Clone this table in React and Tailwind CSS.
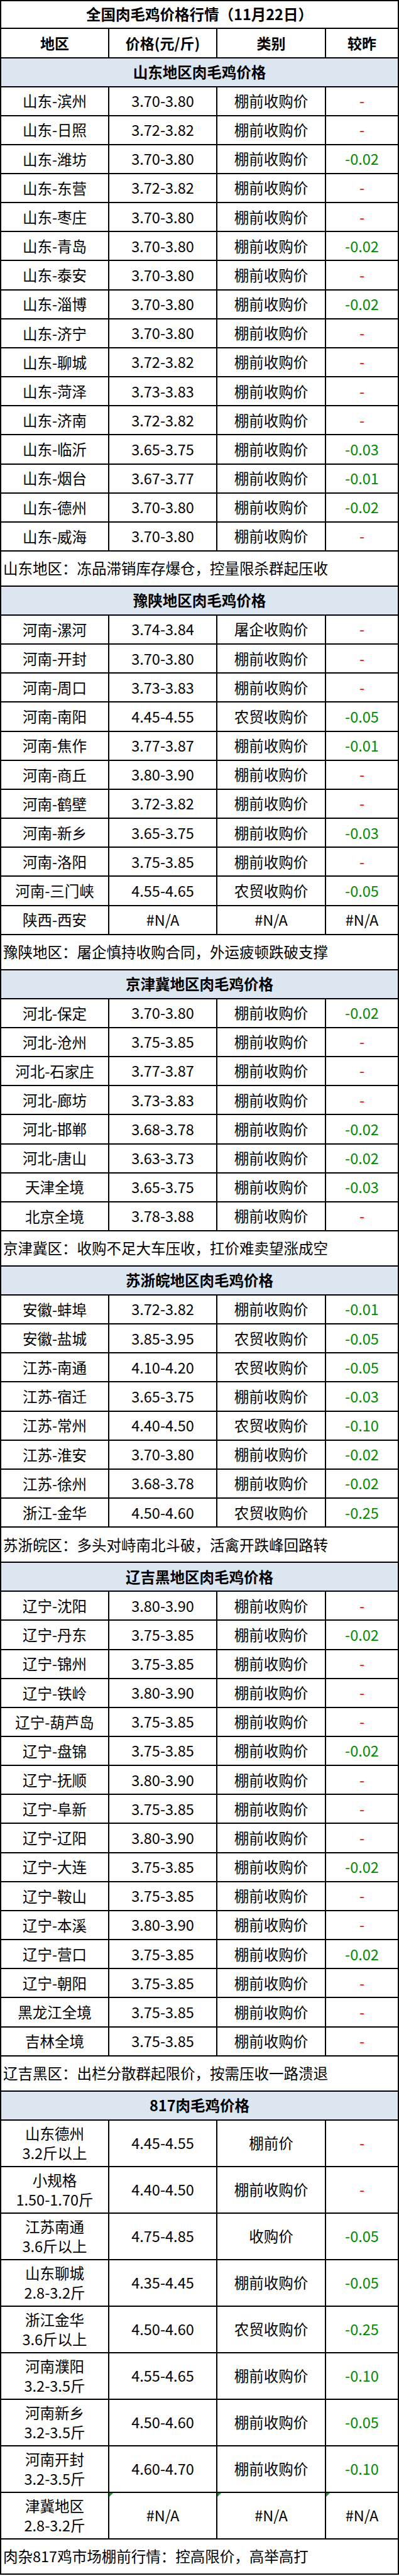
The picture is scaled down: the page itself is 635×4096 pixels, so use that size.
import React from 'react';

const PENG = '棚前收购价';
const NONGMAO = '农贸收购价';

const sections = [
    {
        title: '山东地区肉毛鸡价格',
        rows: [
            ['山东-滨州', '3.70-3.80', PENG, '-'],
            ['山东-日照', '3.72-3.82', PENG, '-'],
            ['山东-潍坊', '3.70-3.80', PENG, '-0.02'],
            ['山东-东营', '3.72-3.82', PENG, '-'],
            ['山东-枣庄', '3.70-3.80', PENG, '-'],
            ['山东-青岛', '3.70-3.80', PENG, '-0.02'],
            ['山东-泰安', '3.70-3.80', PENG, '-'],
            ['山东-淄博', '3.70-3.80', PENG, '-0.02'],
            ['山东-济宁', '3.70-3.80', PENG, '-'],
            ['山东-聊城', '3.72-3.82', PENG, '-'],
            ['山东-菏泽', '3.73-3.83', PENG, '-'],
            ['山东-济南', '3.72-3.82', PENG, '-'],
            ['山东-临沂', '3.65-3.75', PENG, '-0.03'],
            ['山东-烟台', '3.67-3.77', PENG, '-0.01'],
            ['山东-德州', '3.70-3.80', PENG, '-0.02'],
            ['山东-威海', '3.70-3.80', PENG, '-'],
        ],
        note: '山东地区：冻品滞销库存爆仓，控量限杀群起压收',
    },
    {
        title: '豫陕地区肉毛鸡价格',
        rows: [
            ['河南-漯河', '3.74-3.84', '屠企收购价', '-'],
            ['河南-开封', '3.70-3.80', PENG, '-'],
            ['河南-周口', '3.73-3.83', PENG, '-'],
            ['河南-南阳', '4.45-4.55', NONGMAO, '-0.05'],
            ['河南-焦作', '3.77-3.87', PENG, '-0.01'],
            ['河南-商丘', '3.80-3.90', PENG, '-'],
            ['河南-鹤壁', '3.72-3.82', PENG, '-'],
            ['河南-新乡', '3.65-3.75', PENG, '-0.03'],
            ['河南-洛阳', '3.75-3.85', PENG, '-'],
            ['河南-三门峡', '4.55-4.65', NONGMAO, '-0.05'],
            ['陕西-西安', '#N/A', '#N/A', '#N/A'],
        ],
        note: '豫陕地区：屠企慎持收购合同，外运疲顿跌破支撑',
    },
    {
        title: '京津冀地区肉毛鸡价格',
        rows: [
            ['河北-保定', '3.70-3.80', PENG, '-0.02'],
            ['河北-沧州', '3.75-3.85', PENG, '-'],
            ['河北-石家庄', '3.77-3.87', PENG, '-'],
            ['河北-廊坊', '3.73-3.83', PENG, '-'],
            ['河北-邯郸', '3.68-3.78', PENG, '-0.02'],
            ['河北-唐山', '3.63-3.73', PENG, '-0.02'],
            ['天津全境', '3.65-3.75', PENG, '-0.03'],
            ['北京全境', '3.78-3.88', PENG, '-'],
        ],
        note: '京津冀区：收购不足大车压收，扛价难卖望涨成空',
    },
    {
        title: '苏浙皖地区肉毛鸡价格',
        rows: [
            ['安徽-蚌埠', '3.72-3.82', PENG, '-0.01'],
            ['安徽-盐城', '3.85-3.95', NONGMAO, '-0.05'],
            ['江苏-南通', '4.10-4.20', NONGMAO, '-0.05'],
            ['江苏-宿迁', '3.65-3.75', PENG, '-0.03'],
            ['江苏-常州', '4.40-4.50', NONGMAO, '-0.10'],
            ['江苏-淮安', '3.70-3.80', PENG, '-0.02'],
            ['江苏-徐州', '3.68-3.78', PENG, '-0.02'],
            ['浙江-金华', '4.50-4.60', NONGMAO, '-0.25'],
        ],
        note: '苏浙皖区：多头对峙南北斗破，活禽开跌峰回路转',
    },
    {
        title: '辽吉黑地区肉毛鸡价格',
        rows: [
            ['辽宁-沈阳', '3.80-3.90', PENG, '-'],
            ['辽宁-丹东', '3.75-3.85', PENG, '-0.02'],
            ['辽宁-锦州', '3.75-3.85', PENG, '-'],
            ['辽宁-铁岭', '3.80-3.90', PENG, '-'],
            ['辽宁-葫芦岛', '3.75-3.85', PENG, '-'],
            ['辽宁-盘锦', '3.75-3.85', PENG, '-0.02'],
            ['辽宁-抚顺', '3.80-3.90', PENG, '-'],
            ['辽宁-阜新', '3.75-3.85', PENG, '-'],
            ['辽宁-辽阳', '3.80-3.90', PENG, '-'],
            ['辽宁-大连', '3.75-3.85', PENG, '-0.02'],
            ['辽宁-鞍山', '3.75-3.85', PENG, '-'],
            ['辽宁-本溪', '3.80-3.90', PENG, '-'],
            ['辽宁-营口', '3.75-3.85', PENG, '-0.02'],
            ['辽宁-朝阳', '3.75-3.85', PENG, '-'],
            ['黑龙江全境', '3.75-3.85', PENG, '-'],
            ['吉林全境', '3.75-3.85', PENG, '-'],
        ],
        note: '辽吉黑区：出栏分散群起限价，按需压收一路溃退',
    },
];

// 817 rows: region has two lines
const rows817 = [
    [['山东德州', '3.2斤以上'], '4.45-4.55', '棚前价', '-'],
    [['小规格', '1.50-1.70斤'], '4.40-4.50', PENG, '-'],
    [['江苏南通', '3.6斤以上'], '4.75-4.85', '收购价', '-0.05'],
    [['山东聊城', '2.8-3.2斤'], '4.35-4.45', PENG, '-0.05'],
    [['浙江金华', '3.6斤以上'], '4.50-4.60', NONGMAO, '-0.25'],
    [['河南濮阳', '3.2-3.5斤'], '4.55-4.65', PENG, '-0.10'],
    [['河南新乡', '3.2-3.5斤'], '4.50-4.60', PENG, '-0.05'],
    [['河南开封', '3.2-3.5斤'], '4.60-4.70', PENG, '-0.10'],
    [['津冀地区', '2.8-3.2斤'], '#N/A', '#N/A', '#N/A', true],
];

function changeColor(v) {
    if (v === '-') return 'text-[#ff0000]';
    if (v.startsWith('-0')) return 'text-[#008a00]';
    return 'text-black';
}

function ErrorMark() {
    return (
        <span className="absolute left-0 top-0 w-0 h-0 border-t-[6px] border-t-[#1f8f3a] border-r-[6px] border-r-transparent" />
    );
}

function DataRow({ region, price, kind, change, tall, mark }) {
    const h = tall ? 'h-[74px]' : 'h-[46.16px]';
    return (
        <div className={`grid grid-cols-[172px_172px_173px_1fr] border-b-2 border-black ${h}`}>
            <div className="flex flex-col items-center justify-center border-r-2 border-black leading-[30.5px]">
                {Array.isArray(region) ? region.map(line => <span key={line}>{line}</span>) : region}
            </div>
            <div className="relative flex items-center justify-center border-r-2 border-black">
                {mark && <ErrorMark />}
                {price}
            </div>
            <div className="relative flex items-center justify-center border-r-2 border-black">
                {mark && <ErrorMark />}
                {kind}
            </div>
            <div className={`relative flex items-center justify-center ${changeColor(change)}`}>
                {mark && <ErrorMark />}
                {change}
            </div>
        </div>
    );
}

function SectionHeader({ title }) {
    return (
        <div className="h-[46px] flex items-center justify-center bg-[#dce6f1] border-b-2 border-black font-bold">
            {title}
        </div>
    );
}

function NoteRow({ text }) {
    return (
        <div className="h-[56px] flex items-center pl-[3px] border-b-2 border-black">
            {text}
        </div>
    );
}

export default function App() {
    return (
        <div className="w-[635px] bg-white border-x-2 border-t-2 border-black text-black text-[23.5px] font-['Noto_Sans_CJK_SC',sans-serif]">
            <div className="h-[44px] flex items-center justify-center border-b-2 border-black font-bold">
                全国肉毛鸡价格行情（11月22日）
            </div>
            <div className="grid grid-cols-[172px_172px_173px_1fr] h-[46.5px] border-b-2 border-black font-bold text-[23px]">
                <div className="flex items-center justify-center border-r-2 border-black">地区</div>
                <div className="flex items-center justify-center border-r-2 border-black">价格(元/斤)</div>
                <div className="flex items-center justify-center border-r-2 border-black">类别</div>
                <div className="flex items-center justify-center">较昨</div>
            </div>

            {sections.map(section => (
                <React.Fragment key={section.title}>
                    <SectionHeader title={section.title} />
                    {section.rows.map(r => (
                        <DataRow key={r[0]} region={r[0]} price={r[1]} kind={r[2]} change={r[3]} />
                    ))}
                    <NoteRow text={section.note} />
                </React.Fragment>
            ))}

            <SectionHeader title="817肉毛鸡价格" />
            {rows817.map(r => (
                <DataRow key={r[0][0]} region={r[0]} price={r[1]} kind={r[2]} change={r[3]} mark={r[4]} tall />
            ))}
            <NoteRow text="肉杂817鸡市场棚前行情：控高限价，高举高打" />
        </div>
    );
}
